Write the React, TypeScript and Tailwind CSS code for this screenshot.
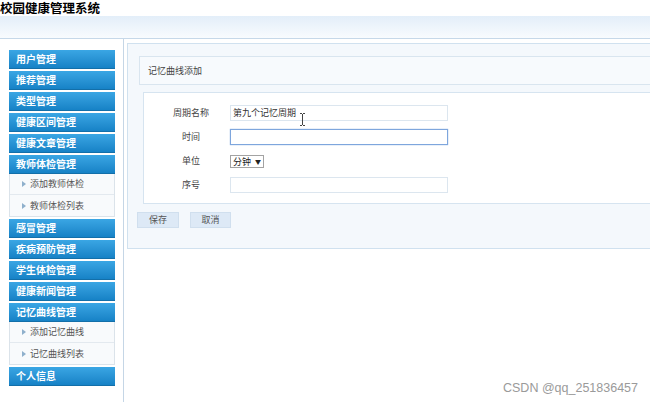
import React from "react";

const Header = ({ children }: { children: React.ReactNode }) => (
  <div className="h-[19px] w-[106px] mb-[2px] bg-gradient-to-b from-[#3aa6e4] to-[#1682c6] border-b border-[#136fa9] text-white font-bold text-[10px] leading-[18px] pl-[7px]">
    {children}
  </div>
);

const Sub = ({ items }: { items: string[] }) => (
  <div className="w-[106px] -mt-[2px] mb-[2px] border-x border-b border-[#dbe3ea] bg-[#f8fafc]">
    {items.map((t, i) => (
      <div
        key={t}
        className={`h-[21px] flex items-center pl-[12px] text-[9px] text-[#555] ${i < items.length - 1 ? "border-b border-[#e3e9ef]" : ""}`}
      >
        <svg width="4" height="6" viewBox="0 0 4 6" className="mr-[4px]">
          <path d="M0 0 L4 3 L0 6 Z" fill="#8fb0cc" />
        </svg>
        {t}
      </div>
    ))}
  </div>
);

const Row = ({ label, children }: { label: string; children: React.ReactNode }) => (
  <div className="h-[24px] flex items-center">
    <div className="w-[78px] text-center text-[9px] text-[#444]">{label}</div>
    {children}
  </div>
);

export default function App() {
  return (
    <div className="relative w-[650px] h-[402px] overflow-hidden bg-white font-['Noto_Sans_CJK_SC',sans-serif]">
      <div className="h-[16px] text-[12.5px] leading-[16px] font-bold text-black">校园健康管理系统</div>
      <div className="h-[23px] bg-gradient-to-b from-[#e3eef9] to-[#f8fbfe] border-b border-[#c6d8e9]" />
      <div className="flex h-[363px]">
        <aside className="w-[124px] shrink-0 border-r border-[#c5d6e6] pt-[11px] pl-[9px]">
          <Header>用户管理</Header>
          <Header>推荐管理</Header>
          <Header>类型管理</Header>
          <Header>健康区间管理</Header>
          <Header>健康文章管理</Header>
          <Header>教师体检管理</Header>
          <Sub items={["添加教师体检", "教师体检列表"]} />
          <Header>感冒管理</Header>
          <Header>疾病预防管理</Header>
          <Header>学生体检管理</Header>
          <Header>健康新闻管理</Header>
          <Header>记忆曲线管理</Header>
          <Sub items={["添加记忆曲线", "记忆曲线列表"]} />
          <Header>个人信息</Header>
        </aside>
        <main className="flex-1 min-w-0 overflow-hidden pl-[3px] pt-[4px]">
          <div className="w-[560px] border border-[#d0e1ef] bg-[#f4f8fc] pt-[12px] pb-[20px]">
            <div className="ml-[11px] h-[29px] border border-[#d9e5ef] bg-[#f7fafd] flex items-center pl-[8px] text-[9px] text-[#444]">
              记忆曲线添加
            </div>
            <div className="ml-[15px] mt-[7px] border border-[#d6e4f0] bg-white pt-[8px] pb-[6px] pl-[8px]">
              <Row label="周期名称">
                <div className="w-[218px] h-[16px] border border-[#dce6ef] bg-white text-[9px] leading-[14px] pl-[2px] text-[#333]">
                  第九个记忆周期
                </div>
              </Row>
              <Row label="时间">
                <div className="w-[218px] h-[16px] border border-[#7ea6dd] shadow-[0_0_1px_#7ea6dd] bg-white" />
              </Row>
              <Row label="单位">
                <div className="w-[34px] h-[13px] border border-[#a3a3a3] bg-white flex items-center justify-between px-[2px] text-[9px] leading-[11px] text-[#222]">
                  <span>分钟</span>
                  <span className="text-[6px]">▼</span>
                </div>
              </Row>
              <Row label="序号">
                <div className="w-[218px] h-[16px] border border-[#dce6ef] bg-white" />
              </Row>
            </div>
            <div className="ml-[9px] mt-[8px] flex gap-[11px]">
              <div className="w-[42px] h-[16px] bg-[#dde9f6] border border-[#d0dfee] text-[9px] text-[#555] flex items-center justify-center">保存</div>
              <div className="w-[41px] h-[16px] bg-[#dde9f6] border border-[#d0dfee] text-[9px] text-[#555] flex items-center justify-center">取消</div>
            </div>
          </div>
        </main>
      </div>
      <svg className="absolute left-[299px] top-[113px]" width="7" height="13" viewBox="0 0 7 13">
        <path d="M1 0.5 H3 M4 0.5 H6 M3.5 1 V12 M1 12.5 H3 M4 12.5 H6" stroke="#444" strokeWidth="1" fill="none" />
      </svg>
      <div className="absolute left-[503px] top-[380px] text-[12.5px] leading-[16px] text-[#9a9a9a] font-['Liberation_Sans',sans-serif]">
        CSDN @qq_251836457
      </div>
    </div>
  );
}
